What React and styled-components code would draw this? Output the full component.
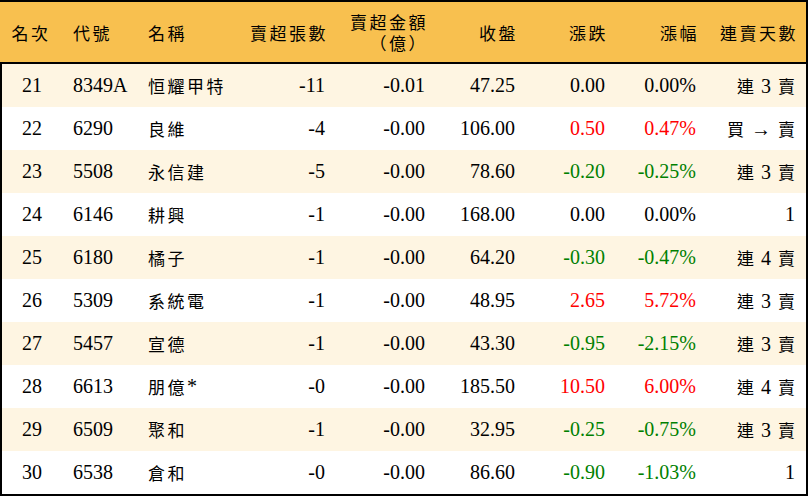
import React from 'react';
import styled, { createGlobalStyle } from 'styled-components';

const GlobalStyle = createGlobalStyle`
  body {
    margin: 0;
    background: #ffffff;
  }
`;

const COLS = '62px 75px 103px 96px 100px 90px 90px 91px 99px';
const BODY_COLS = '60px 75px 103px 96px 100px 90px 90px 91px 99px';

const Frame = styled.div`
  width: 808px;
  box-sizing: border-box;
  border-top: 2px solid #000;
  border-right: 2px solid #000;
  border-bottom: 2px solid #000;
  font-family: "Liberation Serif", "Noto Sans CJK TC", serif;
  color: #000;
`;

const HeaderRow = styled.div`
  display: grid;
  grid-template-columns: ${COLS};
  height: 60px;
  background: #f8c04f;
  border-bottom: 2px solid #000;
`;

const HeadCell = styled.div`
  display: flex;
  flex-direction: column;
  justify-content: center;
  align-items: ${(p) => (p.align === 'center' ? 'center' : p.align === 'left' ? 'flex-start' : 'flex-end')};
  padding: ${(p) => (p.align === 'left' ? '0 0 0 11px' : p.align === 'center' ? '0' : '0 8px 0 0')};
  font-family: "Noto Sans CJK TC", serif;
  font-size: 17px;
  letter-spacing: 2.5px;
  line-height: 21px;
  text-align: right;
`;

const Body = styled.div`
  border-left: 2px solid #000;
`;

const Row = styled.div`
  display: grid;
  grid-template-columns: ${BODY_COLS};
  height: 43px;
  background: ${(p) => (p.odd ? '#fef5e2' : '#ffffff')};
`;

const Cell = styled.div`
  display: flex;
  align-items: center;
  justify-content: ${(p) => (p.align === 'center' ? 'center' : p.align === 'left' ? 'flex-start' : 'flex-end')};
  padding: ${(p) => (p.align === 'left' ? '0 0 0 11px' : p.align === 'center' ? '0' : '0 11px 0 0')};
  font-size: 20px;
  white-space: pre;
  color: ${(p) => (p.tone === 'up' ? '#ff0000' : p.tone === 'down' ? '#008000' : '#000')};
`;

const Han = styled.span`
  font-family: "Noto Sans CJK TC", serif;
  font-size: 17px;
  letter-spacing: 2.5px;
`;

const StreakWrap = styled.span`
  display: inline-flex;
  align-items: baseline;
  gap: 7px;
`;

const Glyph = styled.span`
  font-family: "Noto Sans CJK TC", serif;
  font-size: 17px;
`;

const rows = [
  ['21', '8349A', '恒耀甲特', '-11', '-0.01', '47.25', '0.00', '0.00%', 'c3'],
  ['22', '6290', '良維', '-4', '-0.00', '106.00', '0.50', '0.47%', 'flip'],
  ['23', '5508', '永信建', '-5', '-0.00', '78.60', '-0.20', '-0.25%', 'c3'],
  ['24', '6146', '耕興', '-1', '-0.00', '168.00', '0.00', '0.00%', '1'],
  ['25', '6180', '橘子', '-1', '-0.00', '64.20', '-0.30', '-0.47%', 'c4'],
  ['26', '5309', '系統電', '-1', '-0.00', '48.95', '2.65', '5.72%', 'c3'],
  ['27', '5457', '宣德', '-1', '-0.00', '43.30', '-0.95', '-2.15%', 'c3'],
  ['28', '6613', '朋億*', '-0', '-0.00', '185.50', '10.50', '6.00%', 'c4'],
  ['29', '6509', '聚和', '-1', '-0.00', '32.95', '-0.25', '-0.75%', 'c3'],
  ['30', '6538', '倉和', '-0', '-0.00', '86.60', '-0.90', '-1.03%', '1'],
];

const toneOf = (v) => (v.startsWith('-') ? 'down' : parseFloat(v) > 0 ? 'up' : 'flat');

const Streak = ({ kind }) => {
  if (kind === 'flip') {
    return (
      <StreakWrap>
        <Glyph>買</Glyph>
        <span>→</span>
        <Glyph>賣</Glyph>
      </StreakWrap>
    );
  }
  if (kind.startsWith('c')) {
    return (
      <StreakWrap>
        <Glyph>連</Glyph>
        <span>{kind.slice(1)}</span>
        <Glyph>賣</Glyph>
      </StreakWrap>
    );
  }
  return kind;
};

const Name = ({ text }) => {
  const star = text.endsWith('*');
  return (
    <>
      <Han>{star ? text.slice(0, -1) : text}</Han>
      {star && '*'}
    </>
  );
};

const App = () => (
  <>
    <GlobalStyle />
    <Frame>
      <HeaderRow>
        <HeadCell align="center">名次</HeadCell>
        <HeadCell align="left">代號</HeadCell>
        <HeadCell align="left">名稱</HeadCell>
        <HeadCell>賣超張數</HeadCell>
        <HeadCell>
          <span>賣超金額</span>
          <span>（億）</span>
        </HeadCell>
        <HeadCell>收盤</HeadCell>
        <HeadCell>漲跌</HeadCell>
        <HeadCell>漲幅</HeadCell>
        <HeadCell>連賣天數</HeadCell>
      </HeaderRow>
      <Body>
        {rows.map((r, i) => (
          <Row key={r[0]} odd={i % 2 === 0}>
            <Cell align="center">{r[0]}</Cell>
            <Cell align="left">{r[1]}</Cell>
            <Cell align="left">
              <Name text={r[2]} />
            </Cell>
            <Cell>{r[3]}</Cell>
            <Cell>{r[4]}</Cell>
            <Cell>{r[5]}</Cell>
            <Cell tone={toneOf(r[6])}>{r[6]}</Cell>
            <Cell tone={toneOf(r[7])}>{r[7]}</Cell>
            <Cell>
              <Streak kind={r[8]} />
            </Cell>
          </Row>
        ))}
      </Body>
    </Frame>
  </>
);

export default App;
